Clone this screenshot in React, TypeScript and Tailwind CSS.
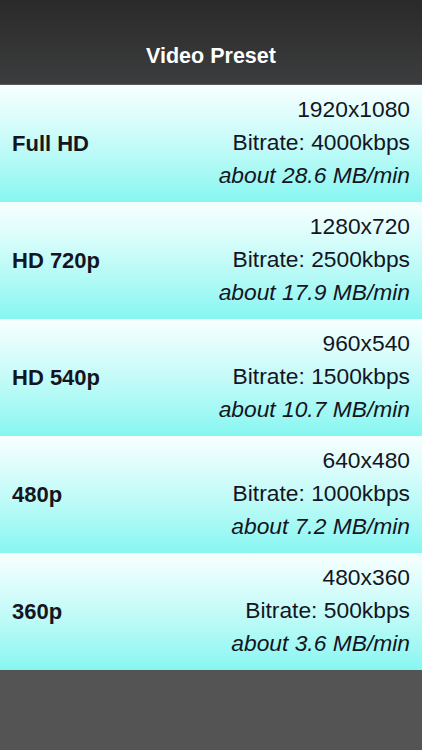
import React from "react";

const presets = [
  { name: "Full HD", res: "1920x1080", bitrate: "4000kbps", size: "28.6" },
  { name: "HD 720p", res: "1280x720", bitrate: "2500kbps", size: "17.9" },
  { name: "HD 540p", res: "960x540", bitrate: "1500kbps", size: "10.7" },
  { name: "480p", res: "640x480", bitrate: "1000kbps", size: "7.2" },
  { name: "360p", res: "480x360", bitrate: "500kbps", size: "3.6" },
];

export default function App() {
  return (
    <div
      className="w-[422px] h-[750px] flex flex-col bg-[#545454] overflow-hidden"
      style={{ fontFamily: "'Liberation Sans', Arial, sans-serif" }}
    >
      <div className="h-[85px] shrink-0 flex items-end justify-center pb-[17px] bg-gradient-to-b from-[#2a2a2a] to-[#3c3d3e] border-b border-[#5a5a5a]">
        <span className="text-white text-[21.5px] font-bold leading-none">Video Preset</span>
      </div>
      {presets.map((p) => (
        <div
          key={p.name}
          className="h-[117px] shrink-0 flex items-center justify-between pl-[12px] pr-[12px] pb-[3px] bg-gradient-to-b from-[#f7ffff] to-[#86f6f1] text-[#15151f]"
        >
          <span className="text-[22px] font-bold pt-[2px]">{p.name}</span>
          <div className="flex flex-col items-end text-[22.8px] leading-[33px]">
            <span>{p.res}</span>
            <span>Bitrate: {p.bitrate}</span>
            <span className="italic">about {p.size} MB/min</span>
          </div>
        </div>
      ))}
      <div className="flex-1 bg-[#545454]" />
    </div>
  );
}
